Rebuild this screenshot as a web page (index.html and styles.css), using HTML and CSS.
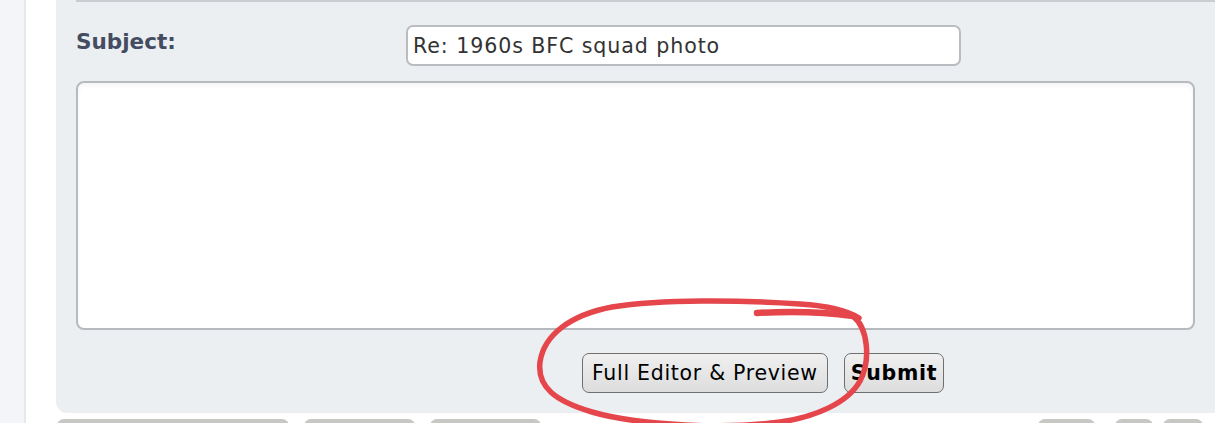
FILE: index.html
```html
<!DOCTYPE html>
<html lang="en">
<head>
<meta charset="utf-8">
<title>Reply</title>
<link rel="stylesheet" href="styles.css">
</head>
<body>
<div class="page">
  <div class="rail"></div>
  <div class="main">
    <form class="panel">
      <div class="sep"></div>
      <div class="subject-row">
        <label class="label" for="subj">Subject:</label>
        <input class="subject" id="subj" type="text" value="Re: 1960s BFC squad photo">
      </div>
      <textarea class="body-text"></textarea>
      <div class="actions">
        <button type="button" class="btn btn-wide">Full Editor &amp; Preview</button>
        <button type="button" class="btn btn-primary">Submit</button>
      </div>
    </form>
    <div class="tabs">
      <div class="tab t1"></div>
      <div class="tab t2"></div>
      <div class="tab t2"></div>
      <div class="spacer"></div>
      <div class="tab t4"></div>
      <div class="tab t5"></div>
      <div class="tab t6"></div>
    </div>
  </div>
</div>
<svg class="annotation" width="1215" height="423" viewBox="0 0 1215 423">
  <path d="M 853 316 C 868 328, 871 360, 860 381 C 848 403, 815 417, 780 422 C 730 429, 640 426, 592 412 C 555 401, 537 387, 540 362 C 544 335, 570 315, 612 307 C 662 299, 740 300, 800 304 C 830 306, 848 311, 859 318" fill="none" stroke="#e4464b" stroke-width="5.5" stroke-linecap="round"/>
  <path d="M 757 313 C 790 311, 825 312, 853 316" fill="none" stroke="#e4464b" stroke-width="6.5" stroke-linecap="round"/>
</svg>
</body>
</html>
```
FILE: styles.css
```css
html, body {
  margin: 0;
  padding: 0;
  background: #ffffff;
  overflow: hidden;
}
body {
  width: 1215px;
  height: 423px;
  position: relative;
  font-family: "DejaVu Sans", Verdana, sans-serif;
}
.page {
  display: flex;
  height: 423px;
}
.rail {
  width: 24px;
  background: #f4f5f8;
  border-right: 2px solid #e6e8eb;
  flex: none;
}
.main {
  flex: 1;
  padding-left: 30px;
  display: flex;
  flex-direction: column;
  min-width: 0;
}
.panel {
  margin: 0;
  background: #eceff2;
  border-bottom-left-radius: 11px;
  padding: 0 0 20px 20px;
  box-sizing: border-box;
  height: 413px;
}
.sep {
  border-top: 2px solid #c9ccd0;
}
.subject-row {
  display: flex;
  align-items: flex-start;
  margin-top: 23px;
}
.label {
  width: 330px;
  margin-top: 5px;
  font-weight: bold;
  font-size: 21.5px;
  line-height: 24px;
  color: #434c60;
}
.subject {
  width: 555px;
  height: 41px;
  box-sizing: border-box;
  border: 2px solid #b9bcc1;
  border-radius: 7px;
  background: #ffffff;
  padding: 0 0 0 5px;
  font-family: "DejaVu Sans", Verdana, sans-serif;
  font-size: 20.6px;
  letter-spacing: 0.9px;
  color: #333333;
  outline: none;
}
.body-text {
  display: block;
  margin-top: 15px;
  width: 1119px;
  height: 249px;
  box-sizing: border-box;
  border: 2px solid #b6b9bd;
  border-radius: 8px;
  background: #ffffff;
  box-shadow: inset 0 3px 4px rgba(0, 0, 0, 0.04);
  resize: none;
  outline: none;
}
.actions {
  display: flex;
  gap: 16px;
  margin-top: 23px;
  margin-left: 506px;
}
.btn {
  height: 40px;
  padding: 0 7px;
  border: 1.5px solid #6f6f6f;
  border-radius: 7px;
  background: linear-gradient(#f0f0f0, #dddddd);
  font-family: "DejaVu Sans", Verdana, sans-serif;
  font-size: 20.5px;
  letter-spacing: 0.7px;
  color: #000000;
}
.btn-wide {
  padding: 0 9px;
}
.btn-primary {
  font-weight: bold;
  padding: 0 6px;
}
.tabs {
  display: flex;
  margin-top: 6px;
  padding-left: 1px;
  padding-right: 12px;
  gap: 15px;
}
.tab {
  height: 12px;
  background: #c7c7c3;
  border-radius: 7px 7px 0 0;
}
.t1 { width: 232px; }
.t2 { width: 111px; }
.spacer { flex: 1; }
.t4 { width: 57px; }
.t5 { width: 38px; margin-left: 5px; }
.t6 { width: 40px; margin-left: -5px; }
.annotation {
  position: absolute;
  left: 0;
  top: 0;
  pointer-events: none;
}
```
